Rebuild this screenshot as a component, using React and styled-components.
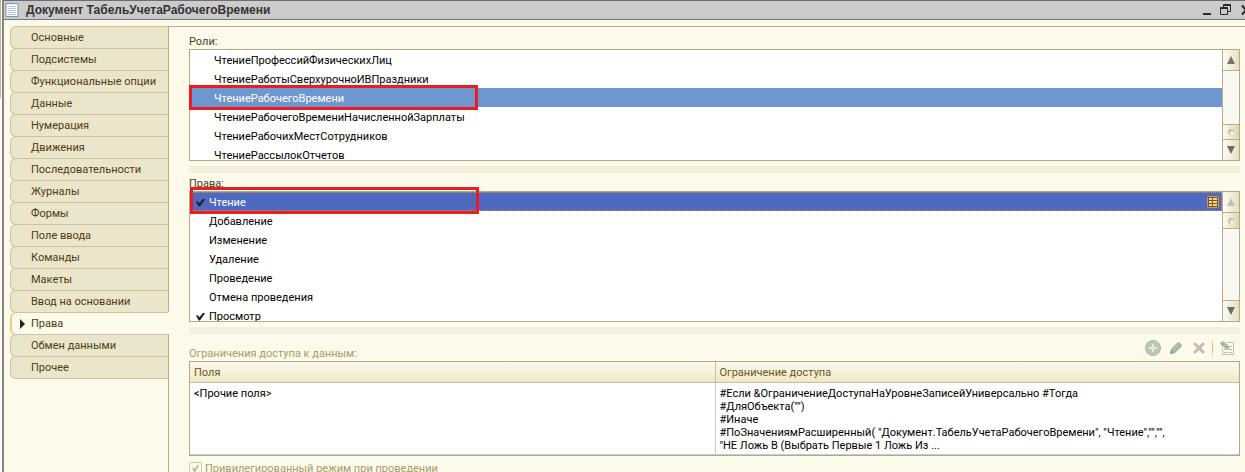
import React, { useState } from 'react'
import styled, { createGlobalStyle } from 'styled-components';

const sections = [
    'Основные', 'Подсистемы', 'Функциональные опции', 'Данные', 'Нумерация', 'Движения',
    'Последовательности', 'Журналы', 'Формы', 'Поле ввода', 'Команды', 'Макеты',
    'Ввод на основании', 'Права', 'Обмен данными', 'Прочее',
]

const roles = [
    'ЧтениеПрофессийФизическихЛиц',
    'ЧтениеРаботыСверхурочноИВПраздники',
    'ЧтениеРабочегоВремени',
    'ЧтениеРабочегоВремениНачисленнойЗарплаты',
    'ЧтениеРабочихМестСотрудников',
    'ЧтениеРассылокОтчетов',
]

const rights = ['Чтение', 'Добавление', 'Изменение', 'Удаление', 'Проведение', 'Отмена проведения', 'Просмотр']

const restriction = `#Если &ОграничениеДоступаНаУровнеЗаписейУниверсально #Тогда
#ДляОбъекта("")
#Иначе
#ПоЗначениямРасширенный( "Документ.ТабельУчетаРабочегоВремени", "Чтение","","",
"НЕ Ложь В (Выбрать Первые 1 Ложь Из ...`

function Scrollbar({ knobAtEnd, upDisabled }) {
    return (
        <ScrollTrack>
            <ScrollButton aria-label="Вверх" disabled={upDisabled}>
                <svg width="8" height="8"><path d="M4 0L8 8H0Z" fill={upDisabled ? '#c3c1b4' : '#77746c'} /></svg>
            </ScrollButton>
            {knobAtEnd && <ScrollSpace />}
            <ScrollKnob $end={knobAtEnd}>
                <svg width="6" height="6">
                    <circle cx="3" cy="3" r="3" fill="#c6c3a8" />
                    <circle cx="4" cy="4" r="2" fill="#f4f1df" />
                </svg>
            </ScrollKnob>
            {!knobAtEnd && <ScrollSpace />}
            <ScrollButton aria-label="Вниз" $down>
                <svg width="8" height="8"><path d="M0 0H8L4 8Z" fill="#6d6a68" /></svg>
            </ScrollButton>
        </ScrollTrack>
    )
}

export default function App() {
    const [section, setSection] = useState('Права')
    const [role, setRole] = useState('ЧтениеРабочегоВремени')
    const [right, setRight] = useState('Чтение')

    return (
        <Shell>
            <GlobalStyle />
            <Rail />
            <Window>
                <TitleBar>
                    <svg width="14" height="16">
                        <path d="M1 1.5H13V14.5H1Z" fill="#f4f8fb" stroke="#7d97a8" />
                        <path d="M4 4.5H11M3 6.5H11M3 8.5H11M3 10.5H11M3 12.5H11" stroke="#b3c9d8" />
                    </svg>
                    <Title>Документ ТабельУчетаРабочегоВремени</Title>
                    <WindowButton aria-label="Свернуть">
                        <svg width="8" height="12"><path d="M0 10H8" stroke="#2b2b2b" strokeWidth="2" /></svg>
                    </WindowButton>
                    <WindowButton aria-label="Восстановить">
                        <svg width="12" height="12" fill="none" stroke="#2b2b2b">
                            <path d="M3.5 3V.5H10.5V7.5H8M3 1.5H11" />
                            <path d="M.5 3.5H7.5V10.5H.5ZM0 4.5H8" />
                        </svg>
                    </WindowButton>
                    <WindowButton aria-label="Закрыть">
                        <svg width="10" height="12"><path d="M1 1.5L9 10.5M9 1.5L1 10.5" stroke="#2b2b2b" strokeWidth="2" /></svg>
                    </WindowButton>
                </TitleBar>
                <Body>
                    <Tabs>
                        {sections.map(name => (
                            <TabSlot key={name} $active={name === section}>
                                <Tab $active={name === section} onClick={() => setSection(name)}>
                                    <TabMark>
                                        {name === section && <svg width="5" height="10"><path d="M0 0L5 5L0 10Z" fill="#222" /></svg>}
                                    </TabMark>
                                    {name}
                                </Tab>
                            </TabSlot>
                        ))}
                        <TabsRest />
                    </Tabs>
                    <Panel>
                        <Caption>Роли:</Caption>
                        <ListBox $height={112}>
                            <Rows role="listbox" aria-label="Роли">
                                {roles.map(name => (
                                    <RoleRow key={name} role="option" aria-selected={name === role} $active={name === role} onClick={() => setRole(name)}>
                                        {name}
                                    </RoleRow>
                                ))}
                            </Rows>
                            <Scrollbar knobAtEnd />
                            <Marker $top={35} $left={-1} $height={25} />
                        </ListBox>
                        <Splitter />
                        <Caption>Права:</Caption>
                        <ListBox $height={131}>
                            <Rows>
                                {rights.map(name => (
                                    <RightRow key={name} $active={name === right} onClick={() => setRight(name)}>
                                        <RightLabel>
                                            <Check type="checkbox" defaultChecked={name === 'Чтение' || name === 'Просмотр'} />
                                            {name}
                                        </RightLabel>
                                        {name === right && (
                                            <svg width="12" height="12">
                                                <rect x=".5" y=".5" width="11" height="11" rx="1" fill="#6b5a4a" stroke="#d99a35" />
                                                <path d="M2 3H5M6 3H10M2 6H5M6 6H10M2 9H5M6 9H10" stroke="#ffd56b" strokeWidth="2" />
                                            </svg>
                                        )}
                                    </RightRow>
                                ))}
                            </Rows>
                            <Scrollbar upDisabled />
                            <Marker $top={-5} $left={0} $height={27} />
                        </ListBox>
                        <Splitter />
                        <TableBar>
                            <Caption $disabled>Ограничения доступа к данным:</Caption>
                            <Tools>
                                <Tool aria-label="Добавить" disabled>
                                    <svg width="16" height="16"><circle cx="8" cy="8" r="7.5" fill="#b9c9b3" stroke="#a9bba6" /><path d="M8 4V12M4 8H12" stroke="#e6ecdb" strokeWidth="2" /></svg>
                                </Tool>
                                <Tool aria-label="Изменить" disabled>
                                    <svg width="12" height="12"><path d="M0 12L1 7L7 1L9 0L12 3L11 5L5 11Z" fill="#a3b89f" /><path d="M3 8L8 3" stroke="#c3d1ba" /><path d="M1 8L4 11L0 12Z" fill="#8ca18d" /></svg>
                                </Tool>
                                <Tool aria-label="Удалить" disabled>
                                    <svg width="12" height="12"><path d="M2 2L10 10M10 2L2 10" stroke="#cdb7af" strokeWidth="3" strokeLinecap="round" /></svg>
                                </Tool>
                                <ToolDivider />
                                <Tool aria-label="Шаблоны" disabled>
                                    <svg width="14" height="14">
                                        <path d="M7 1.5H13.5V13.5H2.5V7" fill="none" stroke="#c2beab" />
                                        <path d="M4 8.5H7M8 8.5H12M4 11.5H7M8 11.5H12M9 5.5H12" stroke="#bbb7a3" />
                                        <path d="M0 2L3 0L9 5V8H6L1 4Z" fill="#a0b89f" />
                                    </svg>
                                </Tool>
                            </Tools>
                        </TableBar>
                        <Table>
                            <thead>
                                <tr><th>Поля</th><th>Ограничение доступа</th></tr>
                            </thead>
                            <tbody>
                                <tr><td>&lt;Прочие поля&gt;</td><td>{restriction}</td></tr>
                            </tbody>
                        </Table>
                        <ModeLabel>
                            <ModeBox type="checkbox" defaultChecked disabled />
                            Привилегированный режим при проведении
                        </ModeLabel>
                    </Panel>
                </Body>
            </Window>
        </Shell>
    )
}

const GlobalStyle = createGlobalStyle`
    * {
        box-sizing: border-box;
    }

    body {
        margin: 0;
        overflow: hidden;
        background: #fcfaea;
        font: 11px/13px Roboto, "Liberation Sans", sans-serif;
    }

    button {
        padding: 0;
        border: 0;
        background: none;
        font: inherit;
        color: inherit;
    }

    svg {
        display: block;
        flex: none;
    }
`;

const Shell = styled.div`
    display: flex;
    min-height: 100vh;
    background: #fcfaea;
`;

const Rail = styled.div`
    width: 2px;
    height: 98px;
    flex: none;
    border-left: 1px solid #c4b98f;
`;

const Window = styled.div`
    display: flex;
    flex: 1;
    flex-direction: column;
    min-width: 0;
    border-left: 2px solid #85838a;
`;

const TitleBar = styled.header`
    display: flex;
    align-items: center;
    gap: 7px;
    height: 20px;
    padding: 0 0 1px 1px;
    border-top: 1px solid #6f6b70;
    border-bottom: 1px solid #77757a;
    background: #cbcbcb;
    overflow: hidden;
`;

const Title = styled.h1`
    flex: 1;
    margin: 0;
    font-family: "Liberation Sans", sans-serif;
    font-size: 12px;
    line-height: 16px;
    font-weight: bold;
    color: #333;
`;

const WindowButton = styled.button`
    flex: none;
    margin-right: 2px;

    &:last-child {
        margin-right: -6px;
    }
`;

const Body = styled.div`
    display: flex;
    flex: 1;
    padding: 6px 0 0 6px;
`;

const Tabs = styled.nav`
    display: flex;
    flex-direction: column;
    width: 159px;
    flex: none;
`;

const TabSlot = styled.div`
    height: 22px;
    flex: none;
    border-right: 1px solid ${props => props.$active ? 'transparent' : '#b8ad85'};
`;

const Tab = styled.button`
    display: flex;
    align-items: center;
    width: 100%;
    height: 23px;
    text-align: left;
    color: #4b3d14;
    border: 1px solid #cbc39d;
    border-right: 0;
    border-left: ${props => props.$active ? '2px solid #edc97e' : '1px solid #cbc39d'};
    border-radius: 6px 0 0 6px;
    background: ${props => props.$active ? '#fcfaea' : '#ebe5cc'};
    padding-left: ${props => props.$active ? 8 : 9}px;
`;

const TabMark = styled.span`
    width: 11px;
    flex: none;
`;

const TabsRest = styled.div`
    flex: 1;
    border-right: 1px solid #b8ad85;
`;

const Panel = styled.main`
    flex: 1;
    min-width: 0;
    padding: 8px 5px 0 20px;
    border-top: 1px solid #b8ad85;
`;

const Caption = styled.div`
    height: 14px;
    color: ${props => props.$disabled ? '#a99a68' : '#4b3d14'};
`;

const ListBox = styled.div`
    position: relative;
    display: flex;
    height: ${props => props.$height}px;
    border: 1px solid #b3a982;
    background: #fff;
`;

const Rows = styled.ul`
    flex: 1;
    margin: 0;
    padding: 0;
    list-style: none;
    overflow: hidden;
`;

const RoleRow = styled.li`
    height: 19px;
    padding-left: 24px;
    line-height: 21px;
    color: ${props => props.$active ? '#fff' : '#000'};
    background: ${props => props.$active ? '#6e97cf' : 'none'};
`;

const RightRow = styled.li`
    display: flex;
    align-items: center;
    justify-content: space-between;
    height: 19px;
    padding: 0 2px 0 6px;
    border: 1px dotted ${props => props.$active ? '#b59c4a' : 'transparent'};
    border-left: 0;
    color: ${props => props.$active ? '#fff' : '#000'};
    background: ${props => props.$active ? '#4f69c1' : 'none'};
`;

const RightLabel = styled.label`
    display: flex;
    align-items: center;
    gap: 4px;
    padding-top: 2px;
`;

const Check = styled.input`
    appearance: none;
    width: 9px;
    height: 8px;
    margin: 0;

    &:checked {
        background: #222;
        clip-path: polygon(0 40%, 20% 35%, 38% 60%, 80% 0, 100% 10%, 45% 100%, 30% 100%);
    }
`;

const ScrollTrack = styled.div`
    display: flex;
    flex-direction: column;
    width: 17px;
    border-left: 1px solid #b8ad85;
    background: #faf8f2;
`;

const ScrollButton = styled.button`
    display: flex;
    align-items: center;
    justify-content: center;
    height: 21px;
    flex: none;
    border: 0 solid #b8ad85;
    border-width: ${props => props.$down ? '1px 0 0' : '0 0 1px'};
    background: linear-gradient(90deg, #fcfbf3, #e6e0c2);
`;

const ScrollKnob = styled.div`
    display: flex;
    align-items: center;
    justify-content: center;
    height: ${props => props.$end ? 15 : 16}px;
    flex: none;
    border: 0 solid #b8ad85;
    border-width: ${props => props.$end ? '1px 0 0' : '0 0 1px'};
    background: linear-gradient(90deg, #fcfbf3, #dcd5b0);
`;

const ScrollSpace = styled.div`
    flex: 1;
`;

/* red highlight frame drawn over a list */
const Marker = styled.div`
    position: absolute;
    top: ${props => props.$top}px;
    left: ${props => props.$left}px;
    width: 289px;
    height: ${props => props.$height}px;
    border: 3px solid #ed1c24;
    pointer-events: none;
`;

const Splitter = styled.div`
    height: 7px;
    margin: 5px 0 4px;
    background: #f4f1de;
`;

const TableBar = styled.div`
    display: flex;
    align-items: flex-end;
    justify-content: space-between;
    height: 23px;
`;

const Tools = styled.div`
    display: flex;
    align-items: center;
    height: 24px;
    padding: 0 2px 2px 0;
`;

const Tool = styled.button`
    display: flex;
    justify-content: center;
    width: 23px;
`;

const ToolDivider = styled.div`
    width: 1px;
    height: 19px;
    margin: 0 2px;
    background: linear-gradient(#f3eed8, #b8ad85, #f3eed8);
`;

const Table = styled.table`
    width: 100%;
    table-layout: fixed;
    border-collapse: separate;
    border-spacing: 0;
    border: 1px solid #b3a982;
    background: #fff;

    th, td {
        text-align: left;
        font-weight: normal;
    }

    th {
        height: 21px;
        padding: 0 4px;
        color: #6a5720;
        border-bottom: 1px solid #c9be94;
        background: linear-gradient(#fcf9ee, #efe8c8);
    }

    td {
        height: 72px;
        padding: 4px 4px 0;
        vertical-align: top;
        white-space: pre;
        border-bottom: 1px solid #c6ccd6;
    }

    th + th {
        border-left: 1px solid #c9be94;
    }

    td + td {
        border-left: 1px solid #c6ccd6;
    }
`;

const ModeLabel = styled.label`
    display: flex;
    align-items: center;
    gap: 3px;
    margin-top: 6px;
    color: #a99a68;
`;

const ModeBox = styled.input`
    appearance: none;
    width: 13px;
    height: 13px;
    margin: 0;
    padding: 2px;
    border: 1px solid #cfc9ae;
    border-radius: 2px;

    &::before {
        content: "";
        display: block;
        width: 7px;
        height: 7px;
        background: #b9b499;
        clip-path: polygon(0 40%, 20% 35%, 38% 60%, 80% 0, 100% 10%, 45% 100%, 30% 100%);
    }
`;
